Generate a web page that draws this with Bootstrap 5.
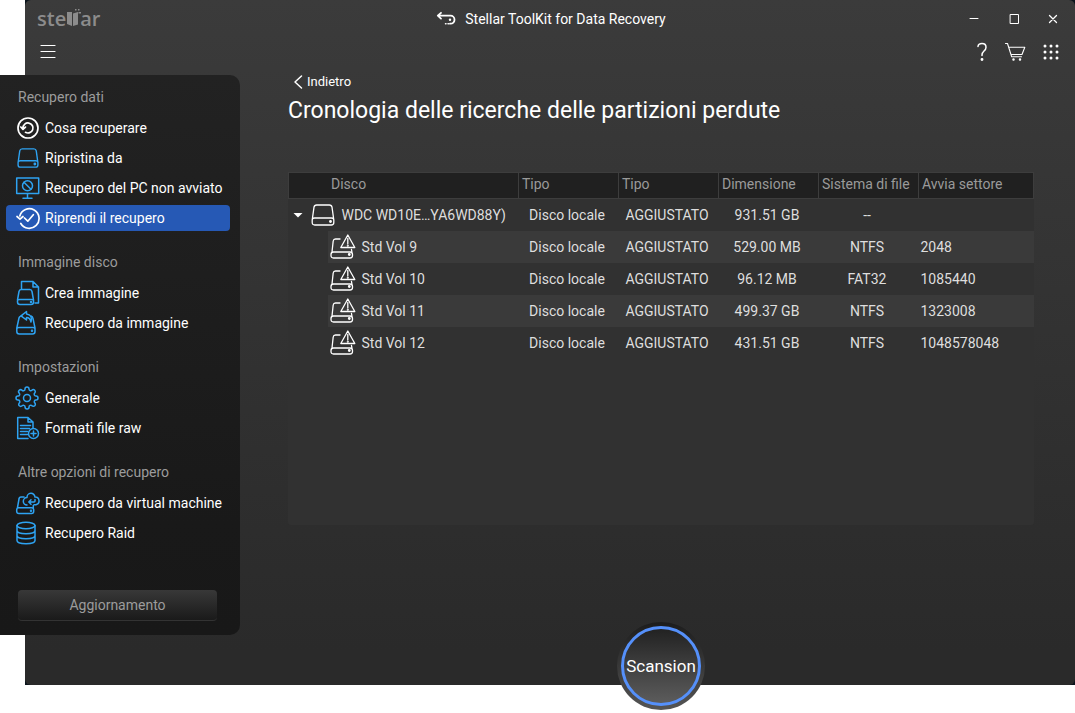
<!DOCTYPE html>
<html lang="it">
<head>
<meta charset="utf-8">
<meta name="viewport" content="width=device-width, initial-scale=1">
<title>Stellar ToolKit for Data Recovery</title>
<link href="https://cdn.jsdelivr.net/npm/bootstrap@5.3.0/dist/css/bootstrap.min.css" rel="stylesheet">
<style>
  body { font-family: Roboto, "Open Sans", sans-serif; font-size: 14px; line-height: 20px; background: #fff; color: #fff; }
  svg { display: block; fill: none; stroke: currentColor; stroke-linecap: round; stroke-linejoin: round; }
  button { color: inherit; }

  .app-back { margin-left: 25px; background: #0b141c; }
  .app-window { min-height: calc(100vh - 29px); border-radius: 6px; background: linear-gradient(#3b3b3b, #363636 25%, #2a2a2a 95%); }

  .title-bar { display: grid; grid-template-columns: 1fr auto 1fr; height: 38px; padding: 0 12px; }
  .brand-logo { font: 600 20px/20px "Open Sans", "Noto Sans", sans-serif; color: #8c8c8c; }
  .app-name { gap: 9px; padding-left: 2px; }
  .tool-bar { height: 28px; padding: 0 15px 0 14px; }
  .icon-btn { display: flex; align-items: center; justify-content: center; padding: 0; border: 0; background: none; }

  .side-menu { width: 240px; margin: 9px 0 50px -25px; padding: 7px 0 14px; border-radius: 0 10px 10px 0; background: linear-gradient(#222, #191919 80%, #181818); }
  .side-title { margin: 16px 0 3px 18px; font-size: 14px; font-weight: 400; line-height: 30px; color: #9c9c9c; }
  .side-title:first-child { margin-top: 0; }
  .side-link { height: 26px; margin: 0 10px 4px 6px; padding-left: 9px; gap: 5px; border-radius: 4px; color: #fff; white-space: nowrap; }
  .side-link svg { width: 25px; height: 26px; color: #2ea3f2; stroke-width: 1.5; }
  .side-link svg.plain { color: #fff; stroke-width: 1.7; }
  .side-link.active { background: #2659b5; }
  .update-btn { height: 31px; margin: 40px 23px 0 18px; padding: 0; border: 0; border-bottom: 1px solid #333; border-radius: 4px; background: linear-gradient(#383838, #1a1a1a); color: #9c9c9c; }

  .page-body { padding: 6px 41px 0 48px; }
  .back-link { gap: 4px; padding-left: 5px; font-size: 13px; color: #fff; }
  .page-title { margin: 4px 0 46px; font-size: 23px; font-weight: 400; line-height: 30px; }
  .result-panel { margin-bottom: 97px; border-radius: 3px; background: #313131; }
  .result-table { width: 100%; table-layout: fixed; color: #dedede; border-collapse: collapse; }
  .result-table th { height: 26px; padding: 0 3px; border: 1px solid #3d3d3d; background: #202020; color: #9a9a9a; font-weight: 400; line-height: 23px; white-space: nowrap; vertical-align: top; }
  .result-table th:first-child { padding-left: 42px; }
  .result-table td { height: 32px; padding: 0 3px 0 0; text-align: center; white-space: nowrap; }
  .result-table td:last-child { padding-left: 2px; text-align: left; }
  .result-table tr.shaded td { background: #3a3a3a; }
  .result-table tr.shaded td:first-child { background: linear-gradient(90deg, transparent 39px, #3a3a3a 39px); }
  .result-table svg { color: #fff; stroke-width: 1.3; }
  .col-disk { width: 230px; }
  .col-data { width: 100px; }
  .disk-cell { gap: 7px; padding-left: 3px; }
  .vol-cell { gap: 6px; padding-left: 41px; }

  .scan-btn { width: 88px; height: 88px; margin-bottom: -25px; padding: 4px; border: 0; border-radius: 50%; background: linear-gradient(#1c1c1c, #555); }
  .scan-face { width: 80px; height: 80px; border: 3px solid #5590fa; border-radius: 50%; background: linear-gradient(#222, #5c5c5c); font-size: 17px; }
</style>
</head>
<body class="min-vh-100">
<svg class="d-none" aria-hidden="true">
  <symbol id="i-drive" viewBox="0 0 24 24">
    <path d="M1.200 17 3 4.200Q3.400 2 5.600 2h12.800q2.200 0 2.600 2.200L22.800 17v2.500q0 2.500-2.500 2.500H3.700q-2.500 0-2.500-2.500V17q0-2 2.500-2h16.600q2.500 0 2.500 2"/>
    <circle cx="19.500" cy="18.500" r=".8" fill="currentColor"/>
  </symbol>
  <symbol id="i-warn" viewBox="0 0 26 26">
    <path d="M10 5H5.500Q3.500 5 3.200 7L2 18M1 20.500q0-2.500 2.500-2.500h16.500q2.500 0 2.500 2.500v1q0 2.500-2.500 2.500H3.500Q1 24 1 21.500zM21.500 15.500l.5 3M17.800 1 10.800 13.500h14zM17.800 4.500V10"/>
    <circle cx="17.800" cy="11.800" r=".4"/><circle cx="19.300" cy="20.500" r=".8" fill="currentColor"/>
  </symbol>
</svg>

<div class="app-back">
<div class="app-window d-flex flex-column">
  <header>
    <div class="title-bar align-items-center">
      <div class="brand-logo d-flex align-items-center" aria-label="stellar">
        <span>ste</span>
        <svg width="14" height="20" viewBox="0 -2 14 20" style="overflow:visible" aria-hidden="true"><path fill="currentColor" stroke="none" d="M1 1h5v14l-5-2zM7 2.500 12 1v12.500l-5 1.500zM9-2h1.500v1.500H9zM12-2h1.500v1.500H12zM12.500 1h2.500v1.500h-2.500z"/></svg>
        <span>ar</span>
      </div>
      <div class="app-name d-flex align-items-center">
        <svg width="20" height="16" viewBox="0 0 20 16" stroke-width="1.800" aria-hidden="true"><path d="M5 1.800 1.800 4.700 5 7.600M2 4.700h12.500a4 4 0 0 1 0 8H14"/><circle cx="14" cy="8.800" r="1.200" fill="currentColor" stroke="none"/><path stroke-dasharray=".5 2" stroke-width="1.500" d="M9.500 12.700h4"/></svg>
        <span>Stellar ToolKit for Data Recovery</span>
      </div>
      <div class="d-flex justify-content-end">
        <button class="icon-btn" style="width:38px" aria-label="Riduci a icona"><svg width="12" height="12" viewBox="0 0 12 12"><path d="M2 5.500h8"/></svg></button>
        <button class="icon-btn" style="width:42px" aria-label="Ingrandisci"><svg width="12" height="12" viewBox="0 0 12 12"><path d="M2.500 1.500h8v9h-8z" stroke-linejoin="miter"/></svg></button>
        <button class="icon-btn" style="width:20px;margin-left:8px" aria-label="Chiudi"><svg width="12" height="12" viewBox="0 0 12 12" stroke-width="1.300"><path d="m2.500 2.500 7 7m0-7-7 7"/></svg></button>
      </div>
    </div>
    <div class="tool-bar d-flex align-items-center justify-content-between">
      <button class="icon-btn" aria-label="Menu"><svg width="18" height="16" viewBox="0 0 18 16" stroke-width="1.200"><path d="M2 1.500h14M2 7.500h14M2 13.500h14"/></svg></button>
      <div class="d-flex align-items-center gap-3">
        <button class="icon-btn" aria-label="Aiuto"><svg width="12" height="20" viewBox="0 0 12 20" stroke-width="1.500"><path d="M2 4.500Q2.300 1.500 6 1.500q4 0 4 3.700 0 2-2 3.800T6 13v.5"/><circle cx="6" cy="17.500" r=".7" fill="currentColor"/></svg></button>
        <button class="icon-btn" aria-label="Carrello"><svg width="22" height="20" viewBox="0 0 22 20" stroke-width="1.100"><path d="M1.500 1.500h2l4.200 13.300H17.500M4.800 5.300h16L18 12.500H7"/><circle cx="9.500" cy="17.500" r=".7" fill="currentColor"/><circle cx="16" cy="17.500" r=".7" fill="currentColor"/></svg></button>
        <button class="icon-btn" aria-label="App"><svg width="18" height="18" viewBox="0 0 18 18" stroke-width="3"><path d="M3 3h0M9 3h0M15 3h0M3 9h0M9 9h0M15 9h0M3 15h0M9 15h0M15 15h0"/></svg></button>
      </div>
    </div>
  </header>

  <div class="d-flex flex-grow-1">
    <nav class="side-menu flex-shrink-0 align-self-start" aria-label="Menu principale">
      <h2 class="side-title">Recupero dati</h2>
      <a href="#" class="side-link d-flex align-items-center text-decoration-none">
        <svg class="plain" viewBox="0 0 25 26"><circle cx="13" cy="13" r="10"/><path d="M8 13a5 5 0 1 1 2.500 4.300M5.800 12 8 14.300l2.500-2.200"/></svg>Cosa recuperare</a>
      <a href="#" class="side-link d-flex align-items-center text-decoration-none">
        <svg viewBox="-1 -1 25 26"><use href="#i-drive" x="0" y="1" width="24" height="22"/></svg>Ripristina da</a>
      <a href="#" class="side-link d-flex align-items-center text-decoration-none">
        <svg viewBox="0 0 25 26"><path d="M1.700 3h22v15.500h-22zM12.500 19v4M8 23.200h9"/><circle cx="12.500" cy="10.700" r="5"/><path d="m9 7.200 7 7"/></svg>Recupero del PC non avviato</a>
      <a href="#" class="side-link active d-flex align-items-center text-decoration-none" aria-current="page">
        <svg class="plain" viewBox="0 0 25 26"><path d="M4.800 11a9.800 9.800 0 1 1 1 7.500M2 11.500l3 2.700 3-2.700M9.500 13l3.300 3.200 5.500-6.500"/></svg>Riprendi il recupero</a>

      <h2 class="side-title">Immagine disco</h2>
      <a href="#" class="side-link d-flex align-items-center text-decoration-none">
        <svg viewBox="0 0 25 26"><path d="M6.500 9V1.500H18L23.500 7v16H20M18 1.500V7h5.500M2.500 20 4 11.500q.4-2 2.200-2h8.600q1.800 0 2.200 2L18.500 20v2q0 2.500-2.500 2.500H5Q2.500 24.500 2.500 22v-1.500q0-1 2-1h12q2 0 2 1"/><circle cx="16" cy="22" r=".5"/></svg>Crea immagine</a>
      <a href="#" class="side-link d-flex align-items-center text-decoration-none">
        <svg viewBox="0 0 25 26"><path d="M7 6Q4.500 6 4 8L1.800 18v3.500q0 2.500 2.500 2.500h13.200q2.500 0 2.500-2.500V18L18 8.500q-.5-2-2-2.500M1.800 19q0-1.500 2-1.500h14.200q2 0 2 1.500"/><path d="M11.500 1.500 6 5.800l5.500 4.200V7.500Q15 7.500 16 12q2-7-4.500-8z"/><circle cx="17" cy="20.700" r=".5"/></svg>Recupero da immagine</a>

      <h2 class="side-title">Impostazioni</h2>
      <a href="#" class="side-link d-flex align-items-center text-decoration-none">
        <svg viewBox="0 -1 25 26"><circle cx="12" cy="12" r="3.500"/><path d="M19.400 15a1.650 1.650 0 0 0 .33 1.820l.06.06a2 2 0 1 1-2.830 2.830l-.06-.06a1.650 1.650 0 0 0-1.820-.33 1.650 1.650 0 0 0-1 1.510V21a2 2 0 0 1-4 0v-.09A1.650 1.650 0 0 0 9 19.400a1.650 1.650 0 0 0-1.820.33l-.06.06a2 2 0 1 1-2.830-2.830l.06-.06a1.650 1.650 0 0 0 .33-1.820 1.650 1.650 0 0 0-1.510-1H3a2 2 0 0 1 0-4h.09A1.650 1.650 0 0 0 4.600 9a1.650 1.650 0 0 0-.33-1.820l-.06-.06a2 2 0 1 1 2.830-2.830l.06.06a1.650 1.650 0 0 0 1.820.33H9a1.650 1.650 0 0 0 1-1.510V3a2 2 0 0 1 4 0v.09a1.650 1.650 0 0 0 1 1.510 1.650 1.650 0 0 0 1.820-.33l.06-.06a2 2 0 1 1 2.830 2.830l-.06.06a1.650 1.650 0 0 0-.33 1.820V9a1.650 1.650 0 0 0 1.510 1H21a2 2 0 0 1 0 4h-.09a1.650 1.650 0 0 0-1.510 1z"/></svg>Generale</a>
      <a href="#" class="side-link d-flex align-items-center text-decoration-none">
        <svg viewBox="0 0 25 26"><path d="M13 23.500H2.700v-21H13l5 4.500v6M13 2.500V7h5M5.500 10.500h10M5.500 13.500h9M5.500 16.500h7M5.500 19.500h7"/><circle cx="18.500" cy="18.500" r="5"/><path d="M18.500 16v5M16 18.500h5"/></svg>Formati file raw</a>

      <h2 class="side-title">Altre opzioni di recupero</h2>
      <a href="#" class="side-link d-flex align-items-center text-decoration-none">
        <svg viewBox="0 0 25 26"><path d="M9 7H6Q4.200 7 4 9L2.500 17.500M1.700 20q0-2.200 2-2.200h12.800q2.200 0 2.200 2.200v1.200q0 2.300-2.200 2.300H4q-2.300 0-2.300-2.300zM18.300 15.500v2.500M12 15a3.700 3.700 0 0 1 0-7.400 4 4 0 0 1 8-.5 3.900 3.900 0 0 1 1 7.700h-2M20 9.500v1.500q0 1-1 1h-5M16 9.800 13.800 12l2.200 2.200"/><circle cx="16" cy="20.700" r=".5"/></svg>Recupero da virtual machine</a>
      <a href="#" class="side-link d-flex align-items-center text-decoration-none">
        <svg viewBox="0 0 25 26"><ellipse cx="11" cy="5.500" rx="9" ry="3.200"/><path d="M2 5.500v15c0 4.200 18 4.200 18 0v-15M2 10.500c0 4.200 18 4.200 18 0M2 15.500c0 4.200 18 4.200 18 0"/></svg>Recupero Raid</a>

      <div class="d-grid"><button class="update-btn">Aggiornamento</button></div>
    </nav>

    <main class="page-body d-flex flex-column flex-grow-1">
      <a href="#" class="back-link d-inline-flex align-items-center align-self-start text-decoration-none">
        <svg width="10" height="16" viewBox="0 0 10 16" stroke-width="1.500" aria-hidden="true"><path d="M8.500 2 2 8l6.500 6"/></svg>Indietro</a>
      <h1 class="page-title">Cronologia delle ricerche delle partizioni perdute</h1>

      <div class="result-panel flex-grow-1">
        <table class="result-table">
          <colgroup><col class="col-disk"><col class="col-data"><col class="col-data"><col class="col-data"><col class="col-data"><col></colgroup>
          <thead>
            <tr><th scope="col">Disco</th><th scope="col">Tipo</th><th scope="col">Tipo</th><th scope="col">Dimensione</th><th scope="col">Sistema di file</th><th scope="col">Avvia settore</th></tr>
          </thead>
          <tbody>
            <tr>
              <td><div class="disk-cell d-flex align-items-center"><svg width="12" height="8" viewBox="0 0 12 8"><path d="M1.500 2h9L6 6.500z" fill="currentColor" stroke="none"/></svg><svg width="24" height="24"><use href="#i-drive"/></svg><span>WDC WD10E…YA6WD88Y)</span></div></td>
              <td>Disco locale</td><td>AGGIUSTATO</td><td>931.51 GB</td><td>--</td><td></td>
            </tr>
            <tr class="shaded">
              <td><div class="vol-cell d-flex align-items-center"><svg width="26" height="26"><use href="#i-warn"/></svg><span>Std Vol 9</span></div></td>
              <td>Disco locale</td><td>AGGIUSTATO</td><td>529.00 MB</td><td>NTFS</td><td>2048</td>
            </tr>
            <tr>
              <td><div class="vol-cell d-flex align-items-center"><svg width="26" height="26"><use href="#i-warn"/></svg><span>Std Vol 10</span></div></td>
              <td>Disco locale</td><td>AGGIUSTATO</td><td>96.12 MB</td><td>FAT32</td><td>1085440</td>
            </tr>
            <tr class="shaded">
              <td><div class="vol-cell d-flex align-items-center"><svg width="26" height="26"><use href="#i-warn"/></svg><span>Std Vol 11</span></div></td>
              <td>Disco locale</td><td>AGGIUSTATO</td><td>499.37 GB</td><td>NTFS</td><td>1323008</td>
            </tr>
            <tr>
              <td><div class="vol-cell d-flex align-items-center"><svg width="26" height="26"><use href="#i-warn"/></svg><span>Std Vol 12</span></div></td>
              <td>Disco locale</td><td>AGGIUSTATO</td><td>431.51 GB</td><td>NTFS</td><td>1048578048</td>
            </tr>
          </tbody>
        </table>
      </div>

      <button class="scan-btn align-self-center"><span class="scan-face d-flex align-items-center justify-content-center">Scansion</span></button>
    </main>
  </div>
</div>
</div>
<script src="https://cdn.jsdelivr.net/npm/bootstrap@5.3.0/dist/js/bootstrap.bundle.min.js"></script>
</body>
</html>
